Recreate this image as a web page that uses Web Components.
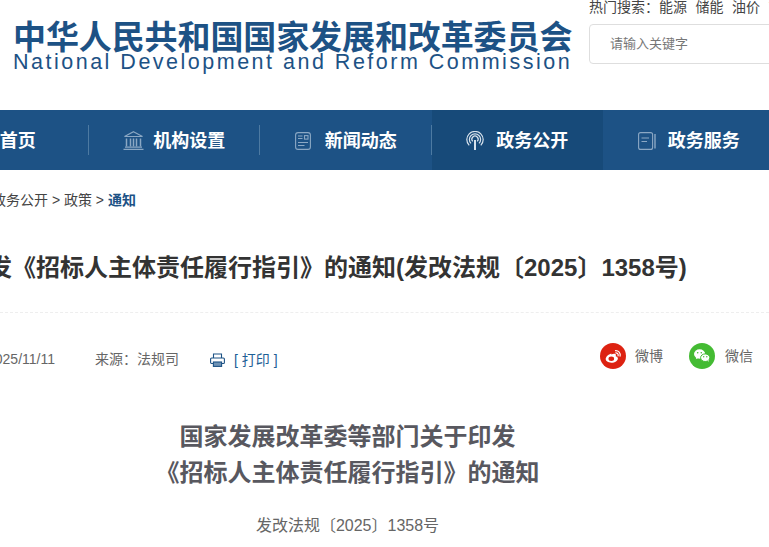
<!DOCTYPE html>
<html lang="zh-CN">
<head>
<meta charset="utf-8">
<style>
html, body { margin: 0; padding: 0; width: 769px; height: 547px; overflow: hidden; background: #fff; }
body { font-family: "Liberation Sans", "Noto Sans CJK SC", sans-serif; }
</style>
</head>
<body>
<site-page>
	<site-header></site-header>
	<main-nav>
		<nav-item label="首页" icon="home" first></nav-item>
		<nav-item label="机构设置" icon="bank"></nav-item>
		<nav-item label="新闻动态" icon="news"></nav-item>
		<nav-item label="政务公开" icon="signal" active></nav-item>
		<nav-item label="政务服务" icon="book" last></nav-item>
	</main-nav>
	<bread-crumb></bread-crumb>
	<article-head></article-head>
	<article-body></article-body>
</site-page>
<script>
class SitePage extends HTMLElement {
	constructor() {
		super();
		this.attachShadow({ mode: "open" });
		this.shadowRoot.innerHTML = `<style>
:host { display: block; width: 769px; height: 547px; overflow: hidden; }
</style><slot></slot>`;
	}
}
customElements.define("site-page", SitePage);

class SiteHeader extends HTMLElement {
	constructor() {
		super();
		this.attachShadow({ mode: "open" });
		this.shadowRoot.innerHTML = `<style>
:host { display: flex; height: 110px; color: #1d5285; }
.logo { width: 589px; padding: 18px 0 0 13px; box-sizing: border-box; flex: none; }
.cn { font: 700 33px/34px "Noto Sans CJK SC", sans-serif; white-space: nowrap; letter-spacing: -0.1px; }
.en { font: 400 21.5px/20px "Liberation Sans", sans-serif; letter-spacing: 2.5px; white-space: nowrap; }
.side { flex: 1; min-width: 0; overflow: hidden; }
.hot { font: 400 14px/14px "Liberation Sans", "Noto Sans CJK SC", sans-serif; color: #444; white-space: nowrap; display: flex; gap: 8.5px; margin: 0 0 10px; }
.hot b { font-weight: 400; margin-right: -8.5px; }
.box { width: 220px; height: 40px; border: 1px solid #dedede; border-radius: 4px; box-sizing: border-box; padding-left: 20px; font: 400 13px/36px "Noto Sans CJK SC", sans-serif; color: #777; }
</style>
<div class="logo">
	<div class="cn">中华人民共和国国家发展和改革委员会</div>
	<div class="en">National Development and Reform Commission</div>
</div>
<div class="side">
	<div class="hot"><b>热门搜索：</b><span>能源</span><span>储能</span><span>油价</span><span>节能</span></div>
	<div class="box">请输入关键字</div>
</div>`;
	}
}
customElements.define("site-header", SiteHeader);

class MainNav extends HTMLElement {
	constructor() {
		super();
		this.attachShadow({ mode: "open" });
		this.shadowRoot.innerHTML = `<style>
:host { display: flex; height: 60px; background: #1d5285; margin-left: -83px; width: 1024px; }
</style><slot></slot>`;
	}
}
customElements.define("main-nav", MainNav);

const NAV_ICONS = {
	home: `<svg width="20" height="18" viewBox="0 0 20 18" fill="none" stroke="#8ba8c4" stroke-width="1.2"><path d="M1 9L10 1L19 9M4 7V17H16V7"/></svg>`,
	bank: `<svg width="21" height="19" viewBox="0 0 21 19" fill="none" stroke="#8ba8c4" stroke-width="1.2"><path d="M10.5 .8 L19.5 5.5 H1.5 Z"/><path d="M3.5 7.5V15.5M7.5 7.5V15.5M13.5 7.5V15.5M17.5 7.5V15.5M10.5 7.5V15.5" stroke-width="1.5"/><path d="M2 16.2H19M0.5 18.4H20.5"/></svg>`,
	news: `<svg width="16" height="18" viewBox="0 0 16 18" fill="none" stroke="#8ba8c4" stroke-width="1.1"><rect x=".6" y=".6" width="14.8" height="16.8" rx="2.5"/><path d="M3 4H7.5M3 6.5H7.5M3 10.5H13M3 13.5H9.5"/><rect x="9.5" y="3.6" width="3.5" height="3.5"/></svg>`,
	signal: `<svg width="18" height="19" viewBox="0 0 18 19" fill="none" stroke="#d7e2ec" stroke-width="1.2"><path d="M3.2 14.4A8.2 8.2 0 1 1 14.8 14.4"/><path d="M5 12.4A5.6 5.6 0 1 1 13 12.4"/><path d="M6.8 10.4A3.1 3.1 0 1 1 11.2 10.4"/><path d="M9 9V19" stroke-width="2"/></svg>`,
	book: `<svg width="18" height="18" viewBox="0 0 18 18" fill="none" stroke="#8ba8c4" stroke-width="1.1"><rect x=".6" y=".6" width="14" height="16.8" rx="2"/><path d="M3.5 6H11M3.5 9.5H9"/><path d="M17 2V16.5" stroke-width="1.4"/></svg>`
};

class NavItem extends HTMLElement {
	constructor() {
		super();
		this.attachShadow({ mode: "open" });
	}
	connectedCallback() {
		let icon = NAV_ICONS[this.getAttribute("icon")] || "";
		this.shadowRoot.innerHTML = `<style>
:host { display: flex; flex: none; width: 171.5px; height: 60px; align-items: center; justify-content: center; position: relative; color: #fff; font: 700 18px/26px "Noto Sans CJK SC", sans-serif; }
:host([active]) { background: #174a79; }
.ico { display: block; flex: none; width: 30px; margin-top: 1px; }
.ico svg { display: block; }
span { margin-top: -2px; }
.sep { position: absolute; right: 0; top: 15px; height: 30px; width: 1px; background: #4d7aa2; }
:host([active]) .sep, :host([last]) .sep { display: none; }
</style><div class="ico">${icon}</div><span>${this.getAttribute("label")}</span><i class="sep"></i>`;
	}
}
customElements.define("nav-item", NavItem);

class BreadCrumb extends HTMLElement {
	constructor() {
		super();
		this.attachShadow({ mode: "open" });
		this.shadowRoot.innerHTML = `<style>
:host { display: block; height: 60px; margin-left: -8px; font: 400 14px/60px "Liberation Sans", "Noto Sans CJK SC", sans-serif; color: #444; white-space: nowrap; }
b { color: #1d5285; font-weight: 700; }
</style>政务公开 &gt; 政策 &gt; <b>通知</b>`;
	}
}
customElements.define("bread-crumb", BreadCrumb);

class ArticleHead extends HTMLElement {
	constructor() {
		super();
		this.attachShadow({ mode: "open" });
		this.shadowRoot.innerHTML = `<style>
:host { display: block; }
h1 { margin: 0 0 0 -12px; font: 700 24px/36px "Liberation Sans", "Noto Sans CJK SC", sans-serif; color: #333; white-space: nowrap; padding-top: 20px; height: 82px; box-sizing: border-box; }
.line { border-top: 1px dashed #eee; }
.meta { display: flex; align-items: center; height: 92px; margin-bottom: 12px; font: 400 14px/20px "Liberation Sans", "Noto Sans CJK SC", sans-serif; color: #666; margin-left: -13px; }
.date { width: 108px; }
.src { width: 115px; }
.print { display: flex; align-items: center; gap: 9px; color: #1d6096; margin-top: 1px; }
.share { margin-left: auto; display: flex; align-items: center; margin-right: 16px; margin-top: -6px; }
.share div { display: flex; align-items: center; gap: 9px; margin-left: 26px; }
.share div + div { gap: 10px; }
svg { display: block; }
</style>
<h1>发《招标人主体责任履行指引》的通知(发改法规〔2025〕1358号)</h1>
<div class="line"></div>
<div class="meta">
	<span class="date">2025/11/11</span>
	<span class="src">来源：法规司</span>
	<span class="print"><svg width="15" height="14" viewBox="0 0 15 14" fill="none" stroke="#1d5285" stroke-width="1.1"><path d="M3.5 5V1H11.5V5"/><path d="M3 10.5H1.5A1 1 0 0 1 .6 9.5V6A1 1 0 0 1 1.6 5H13.4A1 1 0 0 1 14.4 6V9.5A1 1 0 0 1 13.4 10.5H12"/><rect x="3.4" y="9" width="8.2" height="4.4" fill="#6f93b5"/></svg>[ 打印 ]</span>
	<span class="share">
		<div><svg width="26" height="26" viewBox="0 0 26 26"><circle cx="13" cy="13" r="13" fill="#dd2211"/><path d="M11.3 10.5c-3 .9-5.6 3.4-5.6 5.6 0 2 2.4 3.6 5.6 3.6 3.8 0 6.6-2.2 6.6-4.3 0-1.4-1.4-2-2.2-2.2.5-1.2.2-2.1-1-2.4-1-.2-2.2.1-3.4.7z" fill="#fff"/><ellipse cx="11.3" cy="15.8" rx="2.8" ry="2.2" fill="#dd2211"/><path d="M15.5 7.7a4.4 4.4 0 0 1 4.6 5.4M15.8 9.8a2.4 2.4 0 0 1 2.3 3" fill="none" stroke="#fff" stroke-width="1.2" stroke-linecap="round"/></svg><span>微博</span></div>
		<div><svg width="26" height="26" viewBox="0 0 26 26"><circle cx="13" cy="13" r="13" fill="#44bb33"/><ellipse cx="10.6" cy="11" rx="5.6" ry="4.7" fill="#fff"/><path d="M7.7 14l-.9 2.2 2.6-1.3z" fill="#fff"/><ellipse cx="16.2" cy="14.7" rx="4.6" ry="3.8" fill="#fff" stroke="#44bb33"/><path d="M18.4 17.6l1.2 1.5-.2-2.4z" fill="#fff"/><circle cx="8.7" cy="9.7" r=".8" fill="#44bb33"/><circle cx="12.3" cy="9.7" r=".8" fill="#44bb33"/><circle cx="14.7" cy="13.7" r=".7" fill="#44bb33"/><circle cx="17.8" cy="13.7" r=".7" fill="#44bb33"/></svg><span>微信</span></div>
	</span>
</div>`;
	}
}
customElements.define("article-head", ArticleHead);

class ArticleBody extends HTMLElement {
	constructor() {
		super();
		this.attachShadow({ mode: "open" });
		this.shadowRoot.innerHTML = `<style>
:host { display: block; text-align: center; width: 695px; }
h2 { margin: 0; font: 700 24px/36px "Noto Sans CJK SC", sans-serif; color: #58585f; }
p { margin: 27px 0 0; font: 400 16px/20px "Liberation Sans", "Noto Sans CJK SC", sans-serif; color: #666; }
</style><h2>国家发展改革委等部门关于印发<br>《招标人主体责任履行指引》的通知</h2><p>发改法规〔2025〕1358号</p>`;
	}
}
customElements.define("article-body", ArticleBody);
</script>
</body>
</html>
